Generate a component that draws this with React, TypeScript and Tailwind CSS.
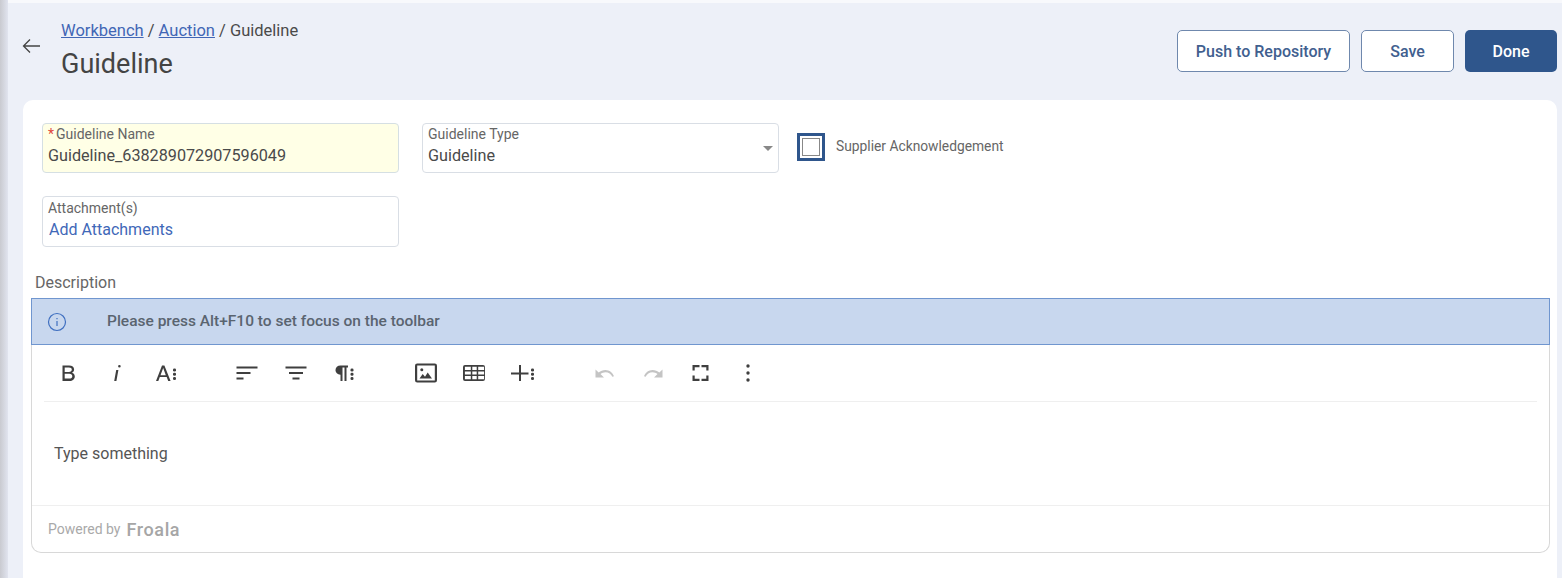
import React from "react";

const dark = "#3f3f3f";

function Btn({ children, color = dark }: { children: React.ReactNode; color?: string }) {
  return (
    <div className="flex h-[24px] w-[48.5px] shrink-0 items-center justify-center">
      <svg width="24" height="24" viewBox="0 0 24 24" fill={color}>
        {children}
      </svg>
    </div>
  );
}

const Dots = ({ x = 19.5 }: { x?: number }) => (
  <>
    <rect x={x} y="7.500" width="3" height="3" rx="1.300" />
    <rect x={x} y="11.800" width="3" height="3" rx="1.300" />
    <rect x={x} y="16.100" width="3" height="3" rx="1.300" />
  </>
);

function Toolbar() {
  return (
    <div className="flex h-[56px] items-center pl-[12px]">
      <div className="flex w-[145.500px] shrink-0">
        <Btn>
          <path
            fillRule="evenodd"
            d="M6.500 4.500h6.600c3 0 5 1.600 5 4 0 1.500-.8 2.700-2.200 3.200 1.800.5 2.900 1.900 2.900 3.800 0 2.600-2.100 4.500-5.300 4.500h-7V4.500Zm2.200 1.900v4.500h4.200c1.800 0 2.900-.9 2.900-2.300s-1-2.200-2.900-2.200H8.700Zm0 6.400v4.800h4.600c1.900 0 3-.9 3-2.400s-1.100-2.400-3-2.400H8.700Z"
          />
        </Btn>
        <Btn>
          <path d="M13.100 5.200a1.300 1.300 0 1 1 2.600 0 1.300 1.300 0 0 1-2.600 0ZM11.200 9h2.200l-2 11H9.200l2-11Z" />
        </Btn>
        <Btn>
          <path
            fillRule="evenodd"
            d="M9 4.500h2.400l6.200 15.500h-2.400l-1.500-3.900H6.800L5.300 20H3L9 4.500Zm1.200 2.600-2.700 7.100h5.300l-2.600-7.100Z"
          />
          <Dots x={20} />
        </Btn>
      </div>
      <div className="ml-[33.250px] flex w-[145.500px] shrink-0">
        <Btn>
          <path d="M1.500 5.500h21v2.100h-21zM1.500 11h14v2.100h-14zM1.500 16.500h7v2.100h-7z" />
        </Btn>
        <Btn>
          <path d="M1.500 5.500h21v2.100h-21zM5 11h14v2.100H5zM8.500 16.500h7v2.100h-7z" />
        </Btn>
        <Btn>
          <path d="M8.500 4.500c-3 0-5 2-5 4.600s2 4.600 5 4.600V20h2V6.400h2V20h2V6.400h1.500V4.500H8.500Z" />
          <Dots x={18.500} />
        </Btn>
      </div>
      <div className="ml-[33.250px] flex w-[145.500px] shrink-0">
        <Btn>
          <path
            fillRule="evenodd"
            d="M1 4.700a2.200 2.200 0 0 1 2.200-2.200h17.600A2.200 2.200 0 0 1 23 4.700v14.600a2.200 2.200 0 0 1-2.200 2.200H3.200A2.200 2.200 0 0 1 1 19.300V4.700Zm2.200-.2v15h17.600v-15H3.200Z"
          />
          <path d="m5.500 17.500 3.200-4.400 2.300 2.700 2.700-4.300 4.300 6H5.500Z" />
          <circle cx="7.800" cy="8.800" r="1.500" />
        </Btn>
        <Btn>
          <path
            fillRule="evenodd"
            d="M3 4h18A2 2 0 0 1 23 6v12a2 2 0 0 1-2 2H3a2 2 0 0 1-2-2V6a2 2 0 0 1 2-2Zm-.1 1.800v3.100h5.900V5.800H2.900Zm7.400 0v3.100h4.400V5.800h-4.400Zm5.900 0v3.100h5.900V5.800h-5.900ZM2.900 10.500v3h5.900v-3H2.900Zm7.400 0v3h4.400v-3h-4.400Zm5.900 0v3h5.900v-3h-5.900ZM2.900 15.100v3.100h5.900v-3.100H2.900Zm7.400 0v3.100h4.400v-3.100h-4.400Zm5.900 0v3.100h5.900v-3.100h-5.900Z"
          />
        </Btn>
        <Btn>
          <path d="M8 4h2v7.500h7.500v2H10V20H8v-6.500H0v-2h8V4Z" />
          <Dots x={20} />
        </Btn>
      </div>
      <div className="ml-[33.250px] flex shrink-0">
        <Btn color="#c4c4c4">
          <path d="M12.500 9c-2.700 0-5 1-6.800 2.500L2.500 8.500V16.500h8.500L7.500 13c1.400-1.100 3.100-1.800 5-1.800 3 0 5.700 1.900 6.800 4.600l1.700-.6C19.700 11.800 16.400 9 12.500 9Z" />
        </Btn>
        <Btn color="#c4c4c4">
          <path d="M11.500 9c2.700 0 5 1 6.800 2.500l3.200-3V16.500H13l3.500-3.500c-1.400-1.100-3.100-1.800-5-1.800-3 0-5.700 1.900-6.800 4.600L3 15.200C4.300 11.800 7.600 9 11.500 9Z" />
        </Btn>
        <Btn>
          <path d="M2.500 4h7v2.200H4.700v3.300H2.500V4ZM11.500 4h7v5.500h-2.200V6.200h-4.800V4ZM2.500 14.500h2.200v3.300h4.800V20h-7v-5.500ZM16.300 14.500h2.200V20h-7v-2.200h4.800v-3.300Z" />
        </Btn>
        <div className="-ml-[2px]">
          <Btn>
            <circle cx="12" cy="5" r="1.700" />
            <circle cx="12" cy="12" r="1.700" />
            <circle cx="12" cy="19" r="1.700" />
          </Btn>
        </div>
      </div>
    </div>
  );
}

export default function App() {
  return (
    <div className="flex h-[578px] w-full overflow-hidden bg-[#edf0f8] font-['Roboto',sans-serif] text-[#4a4a4a]">
      <div className="h-full w-[8px] shrink-0 bg-gradient-to-r from-[#c9cad0] to-[#e1e4ef]" />
      <div className="flex min-w-0 flex-1 flex-col">
        <div className="h-[3px] shrink-0 bg-[#f8f9fc]" />
        <header className="flex h-[97px] shrink-0 items-start justify-between pr-[5px]">
          <div className="flex">
            <svg className="ml-[14px] mt-[35px]" width="19" height="16" viewBox="0 0 19 16" fill="none" stroke="#444" strokeWidth="1.300">
              <path d="M18 8H1.500M8 1.500 1.500 8 8 14.500" />
            </svg>
            <div className="ml-[20px] pt-[18px]">
              <div className="text-[16.500px] leading-[20px]">
                <span className="text-[#4166b5] underline">Workbench</span>
                <span> / </span>
                <span className="text-[#4166b5] underline">Auction</span>
                <span> / Guideline</span>
              </div>
              <h1 className="mt-[7px] text-[27px] leading-[32px] text-[#444]">Guideline</h1>
            </div>
          </div>
          <div className="mt-[27px] flex gap-[11px]">
            <button className="h-[42px] w-[173px] rounded-[5px] border border-[#6f88ad] bg-white pt-[2px] text-[16px] font-medium text-[#41608f]">
              Push to Repository
            </button>
            <button className="h-[42px] w-[93px] rounded-[5px] border border-[#6f88ad] bg-white pt-[2px] text-[16px] font-medium text-[#41608f]">
              Save
            </button>
            <button className="h-[42px] w-[92px] rounded-[5px] bg-[#2f568c] pt-[2px] text-[16px] font-medium text-white">
              Done
            </button>
          </div>
        </header>
        <main className="ml-[15px] mr-[5px] flex-1 rounded-t-[10px] bg-white pl-[8px] pr-[7px] pt-[23px]">
          <div className="flex items-start pl-[11px]">
            <div className="h-[50px] w-[357px] rounded-[4px] border border-[#d5dfe3] bg-[#ffffe6] pl-[5px] pt-[2px]">
              <div className="text-[14px] leading-[16px] text-[#666]">
                <span className="text-[#e0483e]">*</span>
                <span className="ml-[2px]">Guideline Name</span>
              </div>
              <div className="mt-[4px] text-[16.200px] leading-[19px] text-[#4a4a4a]">Guideline_638289072907596049</div>
            </div>
            <div className="relative ml-[23px] h-[50px] w-[357px] rounded-[4px] border border-[#d9dee5] pl-[5px] pt-[2px]">
              <div className="text-[14px] leading-[16px] text-[#666]">Guideline Type</div>
              <div className="mt-[4px] text-[16.200px] leading-[19px] text-[#4a4a4a]">Guideline</div>
              <div className="absolute right-[5px] top-[22px] h-0 w-0 border-x-[5px] border-t-[5px] border-x-transparent border-t-[#888]" />
            </div>
            <div className="ml-[18px] mt-[10px] flex h-[28px] w-[28px] items-center justify-center border-[3px] border-[#2f568c] bg-white">
              <div className="h-[18px] w-[18px] border border-[#888]" />
            </div>
            <div className="ml-[11px] mt-[15px] text-[13.800px] leading-[16px] text-[#666]">Supplier Acknowledgement</div>
          </div>
          <div className="ml-[11px] mt-[23px] h-[51px] w-[357px] rounded-[4px] border border-[#d9dee5] pl-[5px] pt-[3px]">
            <div className="text-[14px] leading-[16px] text-[#666]">Attachment(s)</div>
            <div className="ml-[1px] mt-[4px] text-[16px] leading-[19px] text-[#3f68b8]">Add Attachments</div>
          </div>
          <div className="ml-[4px] mt-[26px] pt-[1px] text-[16px] leading-[17px] text-[#666]">Description</div>
          <div className="mt-[7px] h-[255px] rounded-b-[10px] border-x border-b border-[#d8d8d8]">
            <div className="-mx-px flex h-[47px] items-center border border-[#7096cf] bg-[#c8d7ee]">
              <svg className="ml-[15px]" width="20" height="20" viewBox="0 0 20 20" fill="none" stroke="#3f6fc0" strokeWidth="1.200">
                <circle cx="10" cy="10" r="8.500" />
                <path d="M10 9v5M10 6v1.300" />
              </svg>
              <span className="ml-[40px] pt-[1px] text-[15.500px] font-medium text-[#5a6470]">Please press Alt+F10 to set focus on the toolbar</span>
            </div>
            <Toolbar />
            <div className="mx-[12px] h-px bg-[#efefef]" />
            <div className="h-[103px] pl-[22px] pt-[42px] text-[16px] leading-[20px] text-[#555]">Type something</div>
            <div className="flex h-[47px] items-center border-t border-[#efefef] pl-[16px]">
              <span className="text-[14px] text-[#a9a9a9]">Powered by</span>
              <span className="ml-[6px] text-[18px] font-medium tracking-[0.6px] text-[#a6a6a6]">Froala</span>
            </div>
          </div>
        </main>
      </div>
    </div>
  );
}
